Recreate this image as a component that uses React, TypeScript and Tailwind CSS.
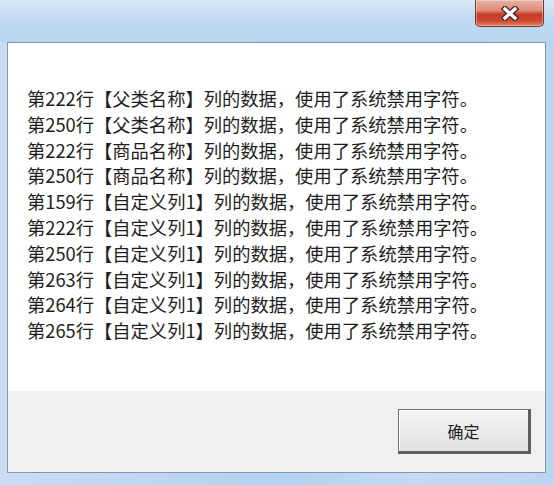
import React from "react";

const lines = [
  ["222", "父类名称"],
  ["250", "父类名称"],
  ["222", "商品名称"],
  ["250", "商品名称"],
  ["159", "自定义列1"],
  ["222", "自定义列1"],
  ["250", "自定义列1"],
  ["263", "自定义列1"],
  ["264", "自定义列1"],
  ["265", "自定义列1"],
];

export default function App() {
  return (
    <div
      className="w-[554px] h-[485px] overflow-hidden flex flex-col bg-[linear-gradient(90deg,#c9def3_0%,#bcd6f1_30%,#b3d1f0_50%,#c3dbf3_75%,#bcd5ef_100%)]"
      style={{ fontFamily: '"Microsoft YaHei", "Noto Sans CJK SC", sans-serif' }}
    >
      <div className="h-[42px] shrink-0 flex justify-end pr-[10px] bg-[linear-gradient(180deg,#d9e9f8_0%,#c3dbf3_40%,#b9d5f1_100%)]">
        <div className="w-[69px] h-[27px] rounded-b-[5px] border border-t-0 border-[#6e3a33] flex items-center justify-center bg-[linear-gradient(180deg,#e9b3a6_0%,#dd8a78_40%,#c73a26_55%,#cf4a33_80%,#e07e66_100%)] shadow-[inset_0_0_0_1px_rgba(255,255,255,0.35)]">
          <svg width="20" height="15" viewBox="0 0 20 15">
            <path d="M5 3 L15 12 M15 3 L5 12" stroke="#4a2420" strokeWidth="6" strokeLinecap="square" fill="none" />
            <path d="M5 3 L15 12 M15 3 L5 12" stroke="#ffffff" strokeWidth="3.4" strokeLinecap="square" fill="none" />
          </svg>
        </div>
      </div>
      <div className="flex-1 flex px-[7px] pr-[8px] pb-[12px]">
        <div className="flex-1 flex flex-col border border-[#8297ad] bg-white">
          <div className="h-[348px] bg-white pt-[43px] pl-[19px] text-[18.3px] leading-[25.8px] text-[#1e1e1e]">
            {lines.map(([n, name], i) => (
              <div key={i} className="whitespace-nowrap">
                第{n}行【{name}】列的数据，使用了系统禁用字符。
              </div>
            ))}
          </div>
          <div className="flex-1 bg-[#f0f0f0] flex justify-end items-start pt-[18px] pr-[14px]">
            <div className="w-[133px] h-[45px] border border-[#6f6f6f] border-r-[3px] border-b-[3px] border-r-[#5e5e5e] border-b-[#5e5e5e] bg-[linear-gradient(180deg,#f4f4f4_0%,#ebebeb_50%,#e2e2e2_100%)] shadow-[inset_1px_1px_0_#ffffff] flex items-center justify-center text-[16px] text-[#222]">
              确定
            </div>
          </div>
        </div>
      </div>
    </div>
  );
}
